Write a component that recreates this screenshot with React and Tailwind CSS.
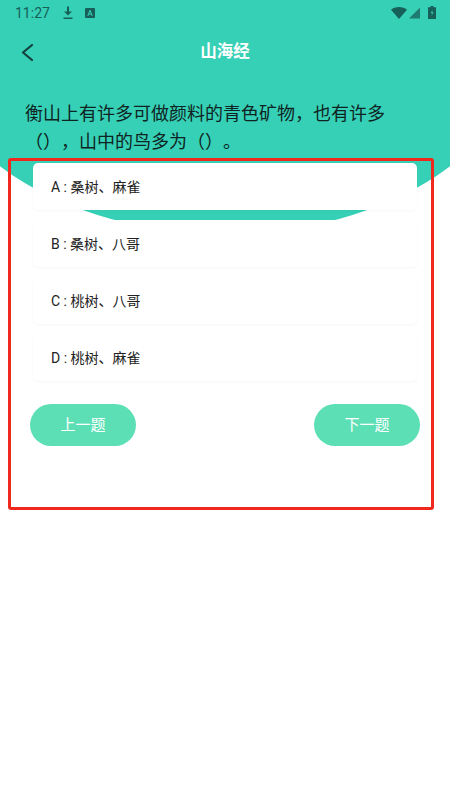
import React from 'react';

const options = ['A : 桑树、麻雀', 'B : 桑树、八哥', 'C : 桃树、八哥', 'D : 桃树、麻雀'];

const StatusBar = () => (
    <div className="flex h-[25px] items-center justify-between pl-[15px] pr-[14px] text-[#17605a]">
        <div className="flex items-center">
            <span className="font-['Roboto',sans-serif] text-[14px] leading-none">11:27</span>
            <svg className="ml-[13px]" width="10" height="14" viewBox="0 0 10 14" fill="currentColor">
                <path d="M4 0.5h2v5h3L5 9.5 1 5.5h3z" />
                <rect x="0.5" y="11.5" width="9" height="1.5" />
            </svg>
            <svg className="ml-[12px]" width="10" height="10" viewBox="0 0 10 10">
                <rect width="10" height="10" rx="1" fill="currentColor" />
                <path d="M2.8 8L5 2.2 7.2 8M3.6 6h2.8" fill="none" stroke="#36d0b6" strokeWidth="1" />
            </svg>
        </div>
        <div className="flex items-center">
            <svg width="16" height="12" viewBox="0 0 16 12" fill="currentColor">
                <path d="M0 2.8C2 1 5 0 8 0s6 1 8 2.8L8 12z" />
            </svg>
            <svg className="ml-[2px]" width="12" height="12" viewBox="0 0 12 12" fill="currentColor" opacity="0.75">
                <path d="M11 0.5V11.5H0z" />
            </svg>
            <svg className="ml-[7px]" width="8" height="13" viewBox="0 0 8 13">
                <path d="M2.5 0h3v1.2H8V13H0V1.2h2.5z" fill="currentColor" />
                <path d="M4.6 3.5L2.8 7.2h1.4L3.5 10l2-3.7H4.1z" fill="#36d0b6" />
            </svg>
        </div>
    </div>
);

const App = () => {
    return (
        <div className="relative h-[800px] w-[450px] overflow-hidden bg-white font-['Roboto','Noto_Sans_CJK_SC',sans-serif] [text-spacing-trim:space-all]">
            {/* teal ellipse behind the header */}
            <div className="absolute left-[-75px] top-[-166px] h-[400px] w-[600px] rounded-[50%] bg-[#36d0b6]" />

            <div className="relative">
                <StatusBar />

                <div className="relative flex h-[54px] items-center justify-center">
                    <svg className="absolute left-[19px] top-[16px]" width="16" height="22" viewBox="0 0 16 22" fill="none" stroke="#14403d" strokeWidth="2.2" strokeLinecap="round" strokeLinejoin="round">
                        <path d="M13 4L4 11.5 13 19" />
                    </svg>
                    <h1 className="text-[16.5px] font-bold leading-none text-white">山海经</h1>
                </div>

                <p className="mt-[21px] w-[390px] pl-[25px] text-[18px] leading-[28px] text-[#0f2422]">
                    衡山上有许多可做颜料的青色矿物，也有许多（），山中的鸟多为（）。
                </p>

                <div className="mt-[7px] flex flex-col gap-[10px] px-[33px]">
                    {options.map((option) => (
                        <div
                            key={option}
                            className="flex h-[47px] items-center rounded-[5px] bg-white pl-[18px] pt-[2px] text-[14px] text-[#222222] shadow-[0_1px_3px_rgba(0,0,0,0.04)]"
                        >
                            {option}
                        </div>
                    ))}
                </div>

                <div className="mt-[23px] flex justify-between px-[30px]">
                    <button className="h-[42px] w-[106px] rounded-full bg-[#5ddfb5] pt-[1px] text-[15px] text-white">上一题</button>
                    <button className="h-[42px] w-[106px] rounded-full bg-[#5ddfb5] pt-[1px] text-[15px] text-white">下一题</button>
                </div>
            </div>

            {/* red highlight frame over the content */}
            <div className="absolute left-[8px] top-[158px] h-[352px] w-[426px] rounded-[3px] border-[3px] border-[#f0281e]" />
        </div>
    );
};

export default App;
